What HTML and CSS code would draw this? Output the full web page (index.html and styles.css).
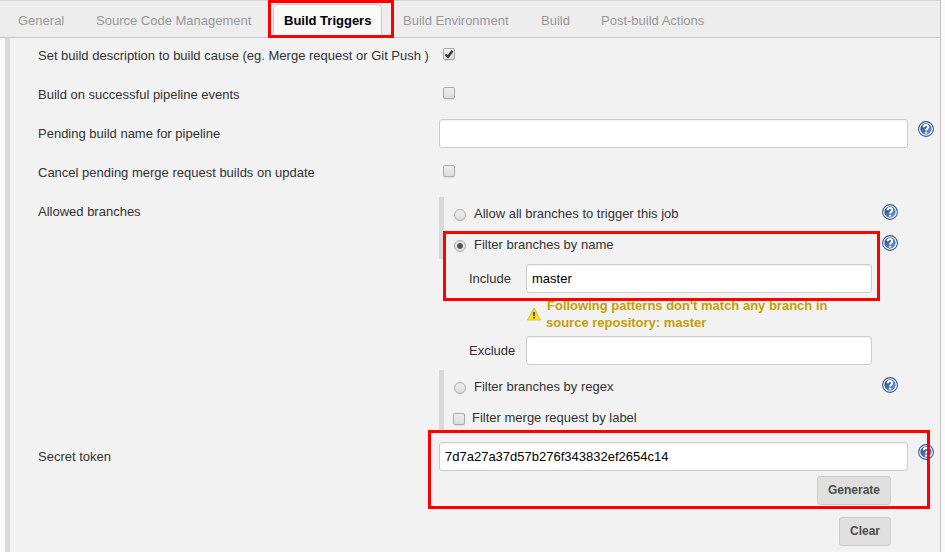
FILE: index.html
```html
<!DOCTYPE html>
<html lang="en">
<head>
<meta charset="utf-8">
<title>Build Triggers</title>
<link rel="stylesheet" href="styles.css">
</head>
<body>
<svg class="defs" aria-hidden="true">
  <defs>
    <linearGradient id="blue" x1="0" y1="0" x2="1" y2="1"><stop offset="0" stop-color="#1c4485"/><stop offset="1" stop-color="#7ba3d3"/></linearGradient>
    <linearGradient id="gold" x1="0" y1="0" x2="0" y2="1"><stop offset="0" stop-color="#e8cf35"/><stop offset="1" stop-color="#fbe51f"/></linearGradient>
    <symbol id="help" viewBox="0 0 16 16">
      <circle cx="8" cy="8" r="7.4" fill="#fff" stroke="#31588f" stroke-width="1.1"/>
      <circle cx="8" cy="8" r="5.7" fill="url(#blue)"/>
      <path d="M5.7 6.300C5.7 3.300 10.300 3.400 10.200 6c0 1.600-2.100 1.700-2.100 3.500M8.100 10.700v1.900" fill="none" stroke="#fff" stroke-width="2"/>
    </symbol>
  </defs>
</svg>
<div class="page">
  <nav class="tabs">
    <a class="tab general">General</a>
    <a class="tab scm">Source Code Management</a>
    <a class="tab active">Build Triggers</a>
    <a class="tab env">Build Environment</a>
    <a class="tab build">Build</a>
    <a class="tab post">Post-build Actions</a>
  </nav>
  <main class="form">
    <div class="row"><label class="wide">Set build description to build cause (eg. Merge request or Git Push )</label><span class="check first"><svg viewBox="0 0 12 12"><path d="M2.500 6.500L5 8.800L9.500 2.800" fill="none" stroke="#333" stroke-width="2.300"/></svg></span></div>
    <div class="row"><label>Build on successful pipeline events</label><span class="check"></span></div>
    <div class="row"><label>Pending build name for pipeline</label><div class="field"></div><svg class="help"><use href="#help"/></svg></div>
    <div class="row"><label>Cancel pending merge request builds on update</label><span class="check"></span></div>
    <div class="row branches">
      <label>Allowed branches</label>
      <div class="options">
        <div class="bar">
          <div class="option"><span class="radio"></span><span class="allow">Allow all branches to trigger this job</span><svg class="help"><use href="#help"/></svg></div>
          <div class="option"><span class="radio on"></span><span>Filter branches by name</span><svg class="help"><use href="#help"/></svg></div>
        </div>
        <div class="sub include"><span>Include</span><div class="field">master</div></div>
        <div class="warning"><svg viewBox="0 0 14 14"><path d="M7 .8L13.500 13H.5z" fill="url(#gold)" stroke="#dcc83a" stroke-linejoin="round"/><path d="M7 5v4M7 10v1.500" stroke="#555018" stroke-width="1.800"/></svg><p><span>Following patterns don't match any branch in</span><br>source repository: master</p></div>
        <div class="sub exclude"><span>Exclude</span><div class="field"></div></div>
        <div class="bar lower">
          <div class="option"><span class="radio"></span><span>Filter branches by regex</span><svg class="help"><use href="#help"/></svg></div>
          <div class="option label-filter"><span class="check"></span><span>Filter merge request by label</span></div>
        </div>
      </div>
    </div>
    <div class="row secret"><label>Secret token</label>
      <div class="token"><div class="field">7d7a27a37d57b276f343832ef2654c14</div><button class="generate">Generate</button><button class="clear">Clear</button></div>
      <svg class="help"><use href="#help"/></svg>
    </div>
  </main>
</div>
<div class="mark mark-tab"></div>
<div class="mark mark-filter"></div>
<div class="mark mark-token"></div>
</body>
</html>
```
FILE: styles.css
```css
* { box-sizing: border-box; }
body { margin: 0; height: 552px; overflow: hidden; background: #f9f9f9; font: 13px/19px "Liberation Sans", Arial, sans-serif; color: #333; }
.defs { position: absolute; width: 0; height: 0; }
.page { width: 941px; height: 552px; border-right: 1px solid #c4c4c4; }
.tabs { display: flex; width: 100%; height: 38px; padding-top: 3px; background: #ededed; border-top: 1px solid #d5d5cf; border-bottom: 1px solid #c8c8c8; color: #999; white-space: nowrap; }
.tab { line-height: 33px; }
.general { margin-left: 18px; width: 78px; }
.scm { width: 177px; }
.tab.active { width: 109px; height: 33px; padding-left: 10px; border: 1px solid #ccc; border-bottom: 0; border-radius: 5px 5px 0 0; background: #f9f9f9; color: #000; font-weight: bold; line-height: 31px; }
.env { margin-left: 21px; width: 138px; }
.build { width: 60px; }
.form { height: 514px; margin-left: 5px; padding: 8px 6px 0 28px; border-left: 5px solid #dadada; background: #f2f2f2; overflow: hidden; }
.row { display: grid; grid-template-columns: 401px 469px 16px; height: 39px; align-items: start; }
.row > .help { margin: -3px 0 0 10px; }
.row > .field { margin-top: -5px; }
.row > .check { margin: 2px 0 0 4px; }
.help { display: block; width: 16px; height: 16px; flex: none; }
.field { height: 29px; padding-left: 5px; border: 1px solid #ccc; border-radius: 3px; background: #fff; color: #000; line-height: 27px; box-shadow: inset 0 1px 1px rgba(0,0,0,.06); }
.check { display: block; flex: none; width: 12px; height: 12px; border: 1px solid #acacac; border-radius: 2px; background: linear-gradient(#eee, #ddd); box-shadow: 0 1px 1px rgba(0,0,0,.08); }
.check svg { display: block; width: 12px; height: 12px; margin: -1px; }
.radio { display: block; flex: none; width: 12px; height: 12px; border: 1px solid #aaa; border-radius: 50%; background: linear-gradient(#eee, #ddd); }
.radio.on { background: radial-gradient(circle, #555 0 2.500px, #e5e5e5 3.300px); }
.row.branches { height: 245px; }
.options { margin-top: -5px; }
.bar { width: 469px; height: 62px; padding: 7px 0 0 10px; border-left: 5px solid #dadada; }
.option { display: flex; height: 31px; }
.option .radio { margin: 5px 8px 0 0; }
.option .help { margin-left: auto; margin-right: 10px; }
.sub { display: grid; grid-template-columns: 57px 346px; margin-left: 30px; line-height: 29px; }
.include { margin-top: 5px; }
.warning { display: flex; height: 39px; margin: 4px 0 0 88px; color: #c4a000; font-weight: bold; line-height: 17px; }
.warning svg { width: 14px; height: 14px; margin-top: 10px; }
.warning p { margin: 0 0 0 5px; white-space: nowrap; }
.warning p span { margin-left: 1px; }
.bar.lower { margin-top: 5px; height: 63px; }
.label-filter .check { margin: 5px 7px 0 -1px; }
.row.secret { height: 110px; }
.token { display: flex; flex-direction: column; align-items: flex-end; margin-top: -5px; }
.token .field { width: 469px; }
button { height: 29px; margin-right: 17px; padding: 0; border: 1px solid #ccc; border-radius: 3px; background: #e0e0e0; color: #4d4d4d; font: bold 12px/27px "Liberation Sans", Arial, sans-serif; }
.generate { width: 74px; margin-top: 5px; }
.clear { width: 52px; margin-top: 12px; }
.mark { position: absolute; border: 3px solid #f00; }
.mark-tab { left: 268px; top: 0; width: 126px; height: 38px; }
.mark-filter { left: 443px; top: 231px; width: 437px; height: 70px; }
.mark-token { left: 428px; top: 430px; width: 502px; height: 79px; }
```
